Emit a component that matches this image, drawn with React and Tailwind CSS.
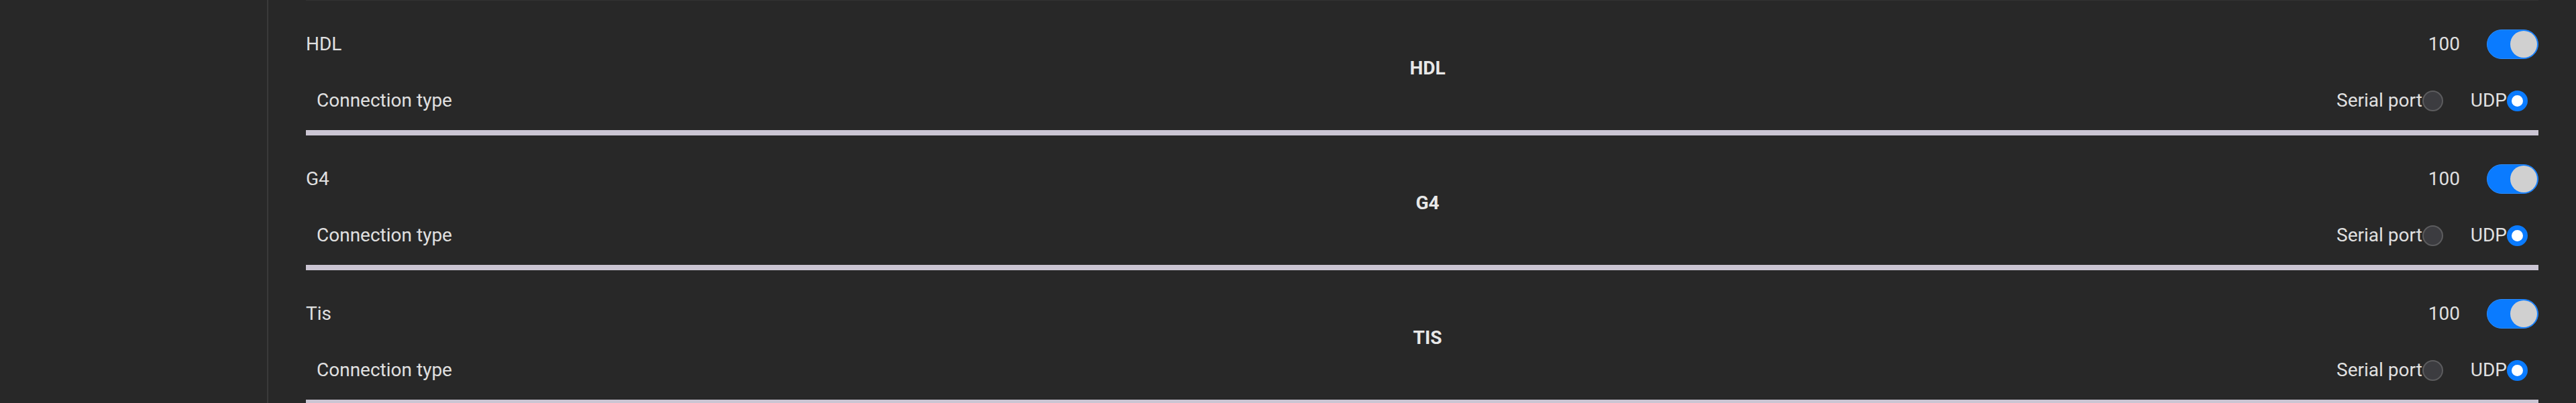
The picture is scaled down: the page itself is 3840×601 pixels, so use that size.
const protocols = [
  { name: 'HDL', title: 'HDL', value: 100, enabled: true, connection: 'udp' },
  { name: 'G4', title: 'G4', value: 100, enabled: true, connection: 'udp' },
  { name: 'Tis', title: 'TIS', value: 100, enabled: true, connection: 'udp' },
]

function Toggle({ on }) {
  return (
    <div
      role="switch"
      aria-checked={on}
      className="flex h-[44px] w-[77px] items-center justify-end rounded-full border border-[#2a8bff] bg-[#0a7bff] pr-px"
    >
      <div className="h-10 w-10 rounded-full bg-[#d0d0d0]" />
    </div>
  )
}

function Radio({ label, checked }) {
  return (
    <label className="flex items-center">
      <span>{label}</span>
      {checked ? (
        <span className="h-[31px] w-[31px] rounded-full border-[7px] border-[#0a7bff] bg-white" />
      ) : (
        <span className="h-[31px] w-[31px] rounded-full border-2 border-[#5c5c5e] bg-[#3c3c40]" />
      )}
    </label>
  )
}

function ProtocolItem({ item }) {
  return (
    <section>
      <div className="flex h-[44px] items-center justify-between mt-[43px]">
        <span>{item.name}</span>
        <div className="flex items-center">
          <span className="mr-10">{item.value}</span>
          <Toggle on={item.enabled} />
        </div>
      </div>

      <div className="pl-4 text-center font-bold leading-[28px] text-[#e8e8e8]">{item.title}</div>

      <div className="mt-[18px] flex h-8 items-center justify-between px-4">
        <span>Connection type</span>
        <div className="flex items-center gap-[41px]">
          <Radio label="Serial port" checked={item.connection === 'serial'} />
          <Radio label="UDP" checked={item.connection === 'udp'} />
        </div>
      </div>

      <div className="mt-7 h-2 bg-[#cbc5d3]" />
    </section>
  )
}

export default function App() {
  return (
    <div className="flex min-h-screen bg-[#282828] font-['Roboto',sans-serif] text-[28px] leading-[1.2] text-[#e0e0e0]">
      <aside className="w-[400px] shrink-0 border-r-2 border-[#3a3a3a]" />

      <main className="flex-1 px-14">
        <div className="h-px bg-[#333333]" />
        {protocols.map((item) => (
          <ProtocolItem key={item.name} item={item} />
        ))}
      </main>
    </div>
  )
}
